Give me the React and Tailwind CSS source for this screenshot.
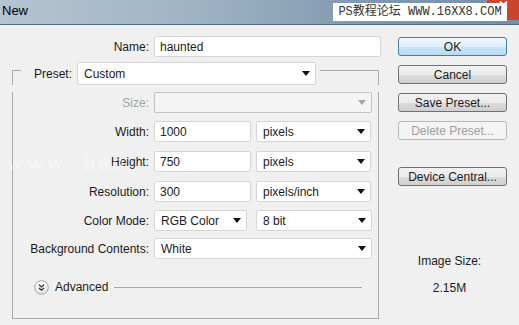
import React from 'react';

const Arrow = ({ muted }) => (
  <svg width="8" height="5" viewBox="0 0 8 5" className="shrink-0">
    <polygon points="0,0 8,0 4,5" fill={muted ? '#a6a6a6' : '#111'} />
  </svg>
);

const Select = ({ value, className, disabled }) => (
  <div
    className={`flex h-[21px] items-center justify-between rounded-[2px] border pl-[6px] pr-[5px] ${
      disabled ? 'border-[#c2c2c2] bg-[#f4f4f4]' : 'border-[#d6d6d6] bg-white'
    } ${className}`}
  >
    <span>{value}</span>
    <Arrow muted={disabled} />
  </div>
);

const Input = ({ value, className }) => (
  <div className={`flex h-[21px] items-center rounded-[2px] border border-[#d6d6d6] bg-white pl-[5px] ${className}`}>
    {value}
  </div>
);

const Row = ({ label, muted, className, children }) => (
  <div className={`flex items-center ${className}`}>
    <div className={`w-[140px] pr-[5px] text-right ${muted ? 'text-[#a3a3a3]' : ''}`}>{label}</div>
    {children}
  </div>
);

const Button = ({ children, primary, disabled, className }) => (
  <div
    className={`flex h-[19px] w-[109px] items-center justify-center rounded-[3px] border ${
      primary
        ? 'border-[#3c7fb1] bg-[linear-gradient(to_bottom,#eef7fc_0%,#dff0fa_50%,#c9e6f6_51%,#b7dcf0_100%)]'
        : disabled
        ? 'border-[#b5b9bc] bg-[#f4f4f4] text-[#a0a0a0]'
        : 'border-[#707070] bg-[linear-gradient(to_bottom,#f2f2f2_0%,#ebebeb_50%,#dddddd_51%,#cfcfcf_100%)]'
    } ${className}`}
  >
    {children}
  </div>
);

export default function App() {
  return (
    <div className="relative h-[325px] w-[519px] overflow-hidden bg-[#f0f0f0] text-[12px] text-[#1b1b1b] font-['Liberation_Sans',Arial,sans-serif]">
      {/* title bar */}
      <div className="flex h-[25px] items-center border-b border-[#55697c] bg-[linear-gradient(to_right,#b4c4d1_0%,#a1b5c6_35%,#8199b0_70%,#7690a8_100%)] pl-[2px] pb-[2px] text-[13px] text-black">
        New
      </div>
      <div className="absolute right-0 top-0 flex h-[20px] w-[32px] justify-center rounded-bl-[4px] bg-[#c9452f] pt-[1px]">
        <svg width="9" height="8" viewBox="0 0 9 8">
          <path d="M1 0.5 L8 7.5 M8 0.5 L1 7.5" stroke="#fff" strokeWidth="1.8" />
        </svg>
      </div>
      <div className="absolute left-[333px] top-[3px] flex h-[18px] w-[174px] items-center justify-center whitespace-nowrap bg-white text-[12px] text-[#333] font-['Liberation_Mono','Noto_Sans_CJK_SC',monospace]">
        PS教程论坛 WWW.16XX8.COM
      </div>

      <div className="flex">
        {/* left column */}
        <div className="w-[381px]">
          <div className="mt-[11px] flex items-center">
            <div className="w-[154px] pr-[5px] text-right">Name:</div>
            <Input value="haunted" className="w-[227px]" />
          </div>

          <div className="ml-[12px] mt-[5px] flex h-[23px] w-[367px]">
            <div className="mt-[8px] w-[9px] border-l border-t border-[#a9a9a9]" />
            <div className="ml-[13px] flex items-center pr-[5px]">Preset:</div>
            <Select value="Custom" className="h-[23px] w-[239px] pr-[5px]" />
            <div className="ml-[4px] mt-[8px] flex-1 border-r border-t border-[#a9a9a9]" />
          </div>

          <div className="ml-[12px] h-[227px] w-[367px] border-b border-l border-r border-[#a9a9a9] pl-[1px]">
            <Row label="Size:" muted className="mt-[7px]">
              <Select value="" disabled className="w-[218px]" />
            </Row>
            <Row label="Width:" className="mt-[8px]">
              <Input value="1000" className="w-[97px]" />
              <Select value="pixels" className="ml-[5px] w-[115px]" />
            </Row>
            <Row label="Height:" className="mt-[9px]">
              <Input value="750" className="w-[97px]" />
              <Select value="pixels" className="ml-[5px] w-[115px]" />
            </Row>
            <Row label="Resolution:" className="mt-[9px]">
              <Input value="300" className="w-[97px]" />
              <Select value="pixels/inch" className="ml-[5px] w-[115px]" />
            </Row>
            <Row label="Color Mode:" className="mt-[8px]">
              <Select value="RGB Color" className="w-[93px]" />
              <Select value="8 bit" className="ml-[9px] w-[116px]" />
            </Row>
            <Row label="Background Contents:" className="mt-[7px]">
              <Select value="White" className="w-[218px]" />
            </Row>
            <div className="mt-[19px] flex items-center pl-[20px]">
              <svg width="15" height="15" viewBox="0 0 15 15">
                <defs>
                  <linearGradient id="adv" x1="0" y1="0" x2="0" y2="1">
                    <stop offset="0" stopColor="#ffffff" />
                    <stop offset="1" stopColor="#e2e2e2" />
                  </linearGradient>
                </defs>
                <circle cx="7.5" cy="7.5" r="6.8" fill="url(#adv)" stroke="#a4a4a4" />
                <path d="M5 4.8 L7.5 7 L10 4.8 M5 8 L7.5 10.2 L10 8" fill="none" stroke="#333" strokeWidth="1.2" />
              </svg>
              <span className="ml-[6px]">Advanced</span>
              <div className="ml-[6px] mr-[16px] h-px flex-1 bg-[#a9a9a9]" />
            </div>
          </div>
        </div>

        {/* right column */}
        <div className="ml-[17px] flex flex-col">
          <Button primary className="mt-[12px]">OK</Button>
          <Button className="mt-[9px]">Cancel</Button>
          <Button className="mt-[9px]">Save Preset...</Button>
          <Button disabled className="mt-[9px]">Delete Preset...</Button>
          <Button className="mt-[27px]">Device Central...</Button>
          <div className="mt-[66px] w-[103px] text-center">Image Size:</div>
          <div className="mt-[9px] w-[103px] text-center">2.15M</div>
        </div>
      </div>

      <div className="pointer-events-none absolute left-[6px] top-[144px] text-[24px] tracking-[3px] text-white/45 font-['Liberation_Serif',serif]">
        www. hao
      </div>
    </div>
  );
}
